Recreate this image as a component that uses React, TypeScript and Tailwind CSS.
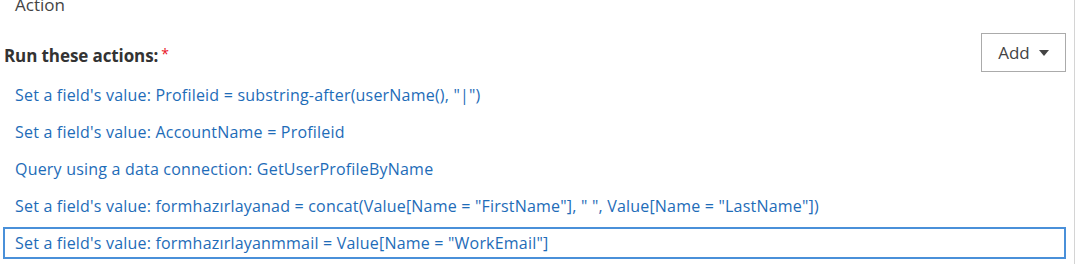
import React from 'react';

const actions = [
  'Set a field\'s value: Profileid = substring-after(userName(), "|")',
  "Set a field's value: AccountName = Profileid",
  'Query using a data connection: GetUserProfileByName',
  'Set a field\'s value: formhazırlayanad = concat(Value[Name = "FirstName"], " ", Value[Name = "LastName"])',
  'Set a field\'s value: formhazırlayanmmail = Value[Name = "WorkEmail"]',
];

export default function App() {
  return (
    <div className="w-[1077px] h-[271px] overflow-hidden bg-white font-['Open_Sans',sans-serif]">
      <div className="w-[1075px] h-full border-r border-[#d4d4d4] pl-[3px] pr-[8px]">
        {/* Section title (clipped at top) */}
        <div className="-mt-[7px] pl-[12px] text-[17px] leading-[24px] text-[#444]">Action</div>

        {/* Header row */}
        <div className="mt-[16px] flex items-center justify-between">
          <div className="pl-[1px] pt-[6px] text-[17px] font-bold text-[#333] tracking-[-0.1px]">
            Run these actions:<span className="ml-[3px] align-top text-[14px] font-normal text-[#e81123]">*</span>
          </div>
          <button className="flex h-[39px] w-[85px] items-center justify-center gap-[9px] border border-[#ababab] bg-white text-[17px] text-[#444]">
            <span>Add</span>
            <svg width="10" height="6" viewBox="0 0 10 6">
              <path d="M0 0h10L5 6z" fill="#444" />
            </svg>
          </button>
        </div>

        {/* Actions list */}
        <div className="mt-[7px] flex flex-col gap-[5px]">
          {actions.map((a, i) => (
            <div
              key={i}
              className={`flex h-[32px] items-center pl-[10px] text-[16px] text-[#1e6cb8] tracking-[0.2px] ${
                i === actions.length - 1 ? 'border-2 border-[#4a90d9]' : 'border-2 border-transparent'
              }`}
            >
              {a}
            </div>
          ))}
        </div>
      </div>
    </div>
  );
}
